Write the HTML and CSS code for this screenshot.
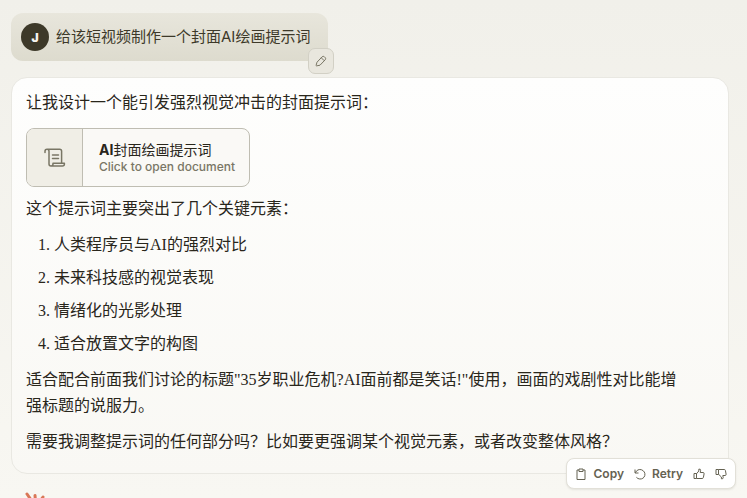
FILE: index.html
```
<!DOCTYPE html>
<html lang="zh-CN">
<head>
  <meta charset="utf-8">
  <title>Chat</title>
  <link rel="stylesheet" href="styles.css">
</head>
<body>
  <main class="chat">
    <div class="user-message">
      <span class="avatar">J</span>
      <span class="user-text">给该短视频制作一个封面AI绘画提示词</span>
      <button class="edit-button" type="button" aria-label="Edit">
        <svg width="12" height="12" viewBox="0 0 12 12" fill="none" stroke="currentColor" stroke-linejoin="round">
          <path d="M2 7.2 7.1 1.8Q8.2.8 9.4 1.8L10.2 2.6Q11.2 3.7 10.2 4.8L5 10.2 1.5 10.9Q1 10.8 1.1 10.3Z"/>
          <path d="M6.3 2.8 9.2 5.7"/>
        </svg>
      </button>
    </div>

    <article class="reply">
      <p>让我设计一个能引发强烈视觉冲击的封面提示词：</p>

      <button class="document" type="button">
        <span class="document-icon">
          <svg width="22" height="20" viewBox="0 0 22 20" fill="none" stroke="currentColor" stroke-width="1.5" stroke-linecap="round" stroke-linejoin="round">
            <path d="M1 4.5V3.2a2 2 0 0 1 4 0V16a2 2 0 0 0 2 2h11.4a2 2 0 0 0 2-2v-.8H9V16a2 2 0 0 1-2 2M3 1.3h12.6a2 2 0 0 1 2 2v11.8M8.5 7h6M8.5 10.5h6"/>
          </svg>
        </span>
        <span class="document-text">
          <span class="document-title"><b>AI</b>封面绘画提示词</span>
          <span class="document-hint">Click to open document</span>
        </span>
      </button>

      <p>这个提示词主要突出了几个关键元素：</p>
      <ol>
        <li>人类程序员与AI的强烈对比</li>
        <li>未来科技感的视觉表现</li>
        <li>情绪化的光影处理</li>
        <li>适合放置文字的构图</li>
      </ol>
      <p>适合配合前面我们讨论的标题"35岁职业危机?AI面前都是笑话!"使用，画面的戏剧性对比能增强标题的说服力。</p>
      <p>需要我调整提示词的任何部分吗？比如要更强调某个视觉元素，或者改变整体风格？</p>

      <div class="actions">
        <button type="button">
          <svg width="12" height="12" viewBox="0 0 12 12" fill="none" stroke="currentColor">
            <path d="M4 2H2v9.5h8V2H8M4 1h4v2.5H4z"/>
          </svg>
          Copy
        </button>
        <button type="button">
          <svg width="12" height="12" viewBox="0 0 12 12" fill="none" stroke="currentColor">
            <path d="M1 1.5V5h3.5M1.3 4.8C2.5 2 5.2.9 7.6 1.8 10 2.7 11.4 5 10.8 7.5 10.2 10 8 11.2 5.8 11 4.4 10.9 3.2 10.3 2.4 9.3"/>
          </svg>
          Retry
        </button>
        <button type="button" aria-label="Good response">
          <svg width="12" height="12" viewBox="0 0 12 12" fill="none" stroke="currentColor" stroke-linejoin="round">
            <path d="M1 5.5h2.5v5H1zM3.5 5.8 5.8 3V1.2Q7.6.6 7.6 2.4L7.2 4.5h3Q11.3 4.6 11.1 5.8L10.4 9.4Q10.2 10.5 9.2 10.5H3.5"/>
          </svg>
        </button>
        <button type="button" aria-label="Bad response">
          <svg width="12" height="12" viewBox="0 0 12 12" fill="none" stroke="currentColor" stroke-linejoin="round">
            <path d="M1 1.5h2.5v5H1zM3.5 1.5h5.8Q10.2 1.5 10.4 2.4L11.1 6.2Q11.2 7.4 10.2 7.5H7.8L8.2 9.6Q8.2 11.2 6.4 10.8V9L3.5 6.2"/>
          </svg>
        </button>
      </div>
    </article>

    <svg class="spark" width="32" height="32" viewBox="0 0 32 32" fill="none" stroke="currentColor" stroke-width="3" stroke-linecap="round">
      <path d="M14 17 5 4M14 17 13 5.5M14 17 21 7M14 17 29 13M14 17 30 20M14 17 25 28M14 17v13M14 17 6 27M14 17 1 22M14 17 1 13"/>
    </svg>
  </main>
</body>
</html>
```
FILE: styles.css
```
* {
  box-sizing: border-box;
}

body {
  margin: 0;
  height: 100vh;
  overflow: hidden;
  background: linear-gradient(#f1f0ea, #f8f7f2);
  color: #29261b;
  font-family: "Liberation Serif", "Noto Sans CJK SC", serif;
}

button {
  margin: 0;
  padding: 0;
  border: 0;
  background: none;
  color: inherit;
  font-family: Inter, "Noto Sans CJK SC", sans-serif;
  cursor: pointer;
}

svg {
  display: block;
  flex-shrink: 0;
}

.chat {
  padding: 13px 18px 0 11px;
}

/* user message */
.user-message {
  position: relative;
  display: flex;
  align-items: center;
  gap: 7px;
  width: fit-content;
  height: 48px;
  padding: 0 18px 0 10px;
  border-radius: 12px;
  background: linear-gradient(#e8e6dc, #dddbce);
  color: #3d3929;
  font-family: Inter, "Noto Sans CJK SC", sans-serif;
}

.avatar {
  display: flex;
  align-items: center;
  justify-content: center;
  width: 28px;
  height: 28px;
  border-radius: 50%;
  background: #3d3929;
  color: #f5f4ef;
  font-size: 12px;
  font-weight: 900;
}

.user-text {
  font-size: 15px;
  line-height: 24px;
}

.edit-button {
  position: absolute;
  right: -6px;
  bottom: -13px;
  display: flex;
  align-items: center;
  justify-content: center;
  width: 26px;
  height: 26px;
  border: 1px solid #d2d0c5;
  border-radius: 7px;
  background: #e9e7de;
  color: #797665;
}

/* reply */
.reply {
  position: relative;
  margin-top: 16px;
  padding: 12px 50px 18px 14px;
  border: 1px solid #e9e8e2;
  border-radius: 16px;
  background: linear-gradient(#fefefd, #f9f8f4);
  font-size: 16px;
  line-height: 26px;
}

.reply p {
  margin: 0 0 10px;
}

.reply > p:first-child {
  margin-bottom: 12px;
}

.reply > p:last-of-type {
  margin-bottom: 0;
}

.reply ol {
  display: flex;
  flex-direction: column;
  gap: 7px;
  margin: 0 0 10px;
  padding-left: 28px;
}

.document {
  display: flex;
  height: 59px;
  margin-bottom: 9px;
  border: 1px solid #bfbdb2;
  border-radius: 8px;
  background: #faf9f6;
  overflow: hidden;
  text-align: left;
}

.document-icon {
  display: flex;
  align-items: center;
  justify-content: center;
  align-self: stretch;
  width: 56px;
  border-right: 1px solid #bfbdb2;
  background: #f0eee6;
  color: #797665;
}

.document-text {
  display: flex;
  flex-direction: column;
  align-self: center;
  padding: 0 14px 0 16px;
}

.document-title {
  font-size: 14px;
  line-height: 18px;
}

.document-hint {
  color: #797665;
  font-size: 12px;
  line-height: 16px;
  font-weight: 500;
}

.actions {
  position: absolute;
  right: -8px;
  bottom: -16px;
  display: flex;
  align-items: center;
  gap: 10px;
  height: 31px;
  padding: 0 8px;
  border: 1px solid #e2e0d8;
  border-radius: 8px;
  background: #fff;
  box-shadow: 0 1px 2px rgba(61, 57, 41, 0.1);
}

.actions button {
  display: flex;
  align-items: center;
  gap: 6px;
  color: #656252;
  font-size: 12px;
  line-height: 16px;
  font-weight: 600;
}

.spark {
  margin: 16px 0 0 11px;
  color: #d97757;
}
```
